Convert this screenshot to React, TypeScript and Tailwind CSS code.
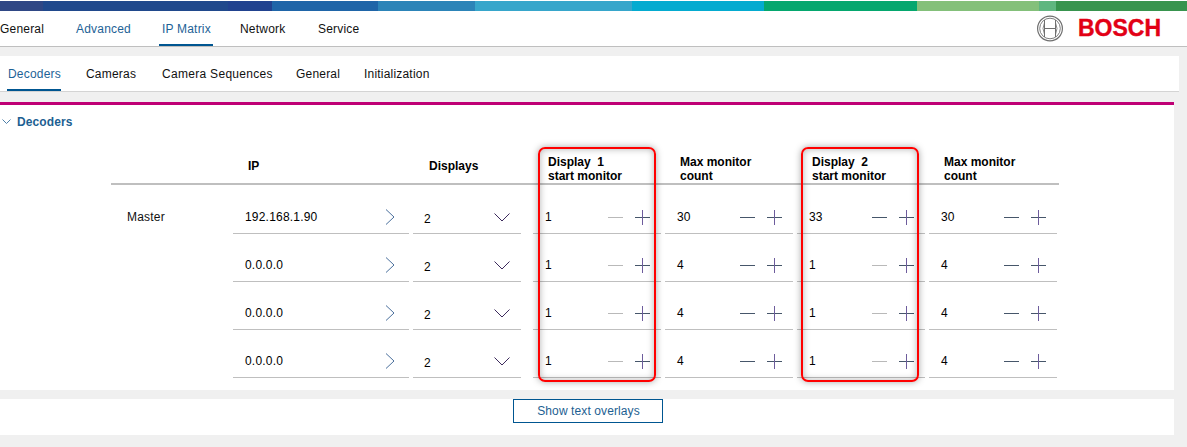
const TOP_BAR = [
  { width: "w-[43px]", color: "bg-[#2f4785]" },
  { width: "w-[185px]", color: "bg-[#20498c]" },
  { width: "w-[44px]", color: "bg-[#21428f]" },
  { width: "w-[106px]", color: "bg-[#1f65a8]" },
  { width: "w-[97px]", color: "bg-[#2c84b8]" },
  { width: "w-[157px]", color: "bg-[#37a6cb]" },
  { width: "w-[132px]", color: "bg-[#04abd0]" },
  { width: "w-[153px]", color: "bg-[#05a76e]" },
  { width: "w-[122px]", color: "bg-[#84c07a]" },
  { width: "w-[17px]", color: "bg-[#5fb67f]" },
  { width: "w-[131px]", color: "bg-[#38944e]" },
];

const MAIN_NAV = [
  { label: "General", className: "w-[76px] text-[#111]" },
  { label: "Advanced", className: "w-[86px] text-[#1d6296]" },
  { label: "IP Matrix", className: "w-[78px] text-[#1d6296]", active: true },
  { label: "Network", className: "w-[78px] text-[#111]" },
  { label: "Service", className: "w-[60px] text-[#111]" },
];

const SUB_TABS = [
  { label: "Decoders", className: "w-[78px] text-[#1d6296]", active: true },
  { label: "Cameras", className: "w-[76px] text-[#111]" },
  { label: "Camera Sequences", className: "w-[134px] text-[#111] tracking-[0.3px]" },
  { label: "General", className: "w-[68px] text-[#111]" },
  { label: "Initialization", className: "w-[70px] text-[#111]" },
];

const ROWS = [
  { label: "Master", ip: "192.168.1.90", start1: "1", count1: "30", start2: "33", count2: "30" },
  { label: "", ip: "0.0.0.0", start1: "1", count1: "4", start2: "1", count2: "4" },
  { label: "", ip: "0.0.0.0", start1: "1", count1: "4", start2: "1", count2: "4" },
  { label: "", ip: "0.0.0.0", start1: "1", count1: "4", start2: "1", count2: "4" },
];

function BoschMark() {
  return (
    <svg width="26" height="27" viewBox="0 0 26 27" fill="none" stroke="#6f6f6f">
      <circle cx="13" cy="13.5" r="12.4" strokeWidth="1.2" />
      <circle cx="13" cy="13.5" r="10.3" strokeWidth="0.9" />
      <path d="M7.5 5v17M18.5 5v17M7.5 13.5h11" strokeWidth="1" />
      <path d="M7.5 7.5q-3 6 0 12M18.5 7.5q3 6 0 12" strokeWidth="0.8" />
    </svg>
  );
}

function Plus() {
  return (
    <svg width="15" height="15" viewBox="0 0 15 15" fill="none">
      <path d="M0 7.5h15" stroke="#46566a" />
      <path d="M7.5 0v15" stroke="#6d5c9c" />
    </svg>
  );
}

function Minus({ disabled }: { disabled?: boolean }) {
  return (
    <svg width="15" height="15" viewBox="0 0 15 15" fill="none">
      <path d="M0 7.5h15" stroke={disabled ? "#b9b9b9" : "#46566a"} />
    </svg>
  );
}

function NumberCell({ value, minusDisabled }: { value: string; minusDisabled?: boolean }) {
  return (
    <div className="w-[128px] h-[48px] shrink-0 mr-[4px] border-b border-[#bfbfbf] pl-[12px] pr-[11px] pt-[16px] flex items-center text-black">
      <span className="flex-1 -mt-[1px]">{value}</span>
      <div className="flex gap-[12px] -mt-[1px]">
        <Minus disabled={minusDisabled} />
        <Plus />
      </div>
    </div>
  );
}

function RedBox({ className }: { className: string }) {
  return (
    <div
      className={`absolute -top-[1px] w-[118px] h-[235px] border-2 border-[#ff0000] rounded-[7px] shadow-[0_0_7px_rgba(0,0,0,0.35),inset_0_0_7px_rgba(0,0,0,0.3)] ${className}`}
    />
  );
}

export default function App() {
  return (
    <div className="w-[1187px] h-[447px] overflow-hidden bg-[#f0f0f0] text-[12px] leading-[14px] tracking-[0.2px] font-['Liberation_Sans',Arial,sans-serif]">
      <div className="bg-white pt-[1px]">
        <div className="flex h-[10px]">
          {TOP_BAR.map((segment) => (
            <div key={segment.color} className={`${segment.width} ${segment.color}`} />
          ))}
        </div>
      </div>

      <div className="h-[36px] bg-white border-b border-[#bfbfbf] flex relative">
        {MAIN_NAV.map((item) => (
          <div key={item.label} className={`h-[35px] pt-[11px] ${item.className}`}>
            <span className={`inline-block h-[24px] ${item.active ? "border-b-2 border-[#005691] -ml-[3px] pl-[3px] -mr-[2px] pr-[2px]" : ""}`}>
              {item.label}
            </span>
          </div>
        ))}
        <div className="ml-auto flex items-center mr-[26px] -mt-[1px] gap-[15px]">
          <BoschMark />
          <span className="text-[23px] leading-[26px] font-bold tracking-[0px] text-[#e20015] [-webkit-text-stroke:0.4px_#e20015]">BOSCH</span>
        </div>
      </div>

      <div className="mt-[9px] w-[1179px] h-[36px] bg-white border-b border-[#d4d4d4] flex pl-[8px]">
        {SUB_TABS.map((tab) => (
          <div key={tab.label} className={`h-[35px] pt-[11px] ${tab.className}`}>
            <span className={`inline-block h-[24px] ${tab.active ? "border-b-2 border-[#005691] -ml-[1px] pl-[1px]" : ""}`}>
              {tab.label}
            </span>
          </div>
        ))}
      </div>

      <div className="mt-[10px] w-[1174px] h-[288px] bg-white border-t-[3px] border-[#bf0075]">
        <div className="flex items-center h-[14px] mt-[10px] pl-[2px] gap-[6px] font-bold tracking-[0.1px] text-[#1d5f92]">
          <svg width="9" height="6" viewBox="0 0 9 6" fill="none" stroke="#4d7fa8">
            <path d="M0.5 0.5l4 4 4-4" />
          </svg>
          <span>Decoders</span>
        </div>

        <div className="relative mt-[19px] ml-[111px] w-[948px]">
          <div className="flex h-[37px] mb-[1px] border-b-2 border-[#bfbfbf] font-bold tracking-[0px] text-black">
            <div className="w-[137px] shrink-0" />
            <div className="w-[181px] shrink-0 pt-[11px]">IP</div>
            <div className="w-[119px] shrink-0 pt-[11px]">Displays</div>
            <div className="w-[132px] shrink-0 pt-[7px]">Display&nbsp; 1<br />start monitor</div>
            <div className="w-[132px] shrink-0 pt-[7px]">Max monitor<br />count</div>
            <div className="w-[132px] shrink-0 pt-[7px]">Display&nbsp; 2<br />start monitor</div>
            <div className="w-[115px] shrink-0 pt-[7px]">Max monitor<br />count</div>
          </div>

          {ROWS.map((row, index) => (
            <div key={index} className="flex h-[48px]">
              <div className="w-[122px] shrink-0 pl-[16px] pt-[24px] text-[#111]">{row.label}</div>
              <div className="w-[176px] h-[48px] shrink-0 mr-[4px] border-b border-[#bfbfbf] pl-[12px] pr-[14px] pt-[16px] flex items-center justify-between text-black">
                <span className="-mt-[1px]">{row.ip}</span>
                <svg width="10" height="16" viewBox="0 0 10 16" fill="none" stroke="#4a6f9c" className="-mt-[1px]">
                  <path d="M1 0.5l8 7.5-8 7.5" />
                </svg>
              </div>
              <div className="w-[108px] h-[48px] shrink-0 mr-[12px] border-b border-[#bfbfbf] pl-[11px] pr-[11px] pt-[16px] flex items-center justify-between text-black">
                <span className="mt-[2px]">2</span>
                <svg width="16" height="9" viewBox="0 0 16 9" fill="none" stroke="#3c2a5c" className="-mt-[1px]">
                  <path d="M0.5 0.5l7.5 7.5 7.5-7.5" />
                </svg>
              </div>
              <NumberCell value={row.start1} minusDisabled />
              <NumberCell value={row.count1} />
              <NumberCell value={row.start2} minusDisabled={row.start2 === "1"} />
              <NumberCell value={row.count2} />
            </div>
          ))}

          <RedBox className="left-[427px]" />
          <RedBox className="left-[690px]" />
        </div>
      </div>

      <div className="mt-[9px] w-[1174px] h-[36px] bg-white flex justify-center pl-[2px]">
        <div className="w-[150px] h-[24px] pl-[1px] border border-[#005691] tracking-[0.1px] text-[#1d5f92] flex items-center justify-center">
          Show text overlays
        </div>
      </div>
    </div>
  );
}
